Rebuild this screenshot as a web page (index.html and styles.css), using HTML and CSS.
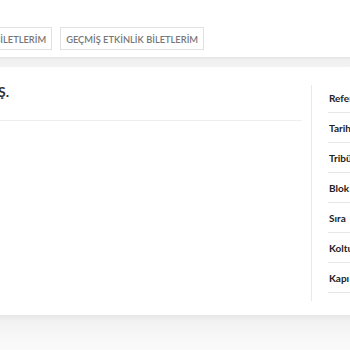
FILE: index.html
```html
<!DOCTYPE html>
<html lang="tr">
<head>
    <meta charset="UTF-8">
    <meta name="viewport" content="width=device-width, initial-scale=1.0">
    <title>Biletlerim</title>

    <link rel="stylesheet" href="styles.css">
</head>
<body>

    <div class="tabs-bar">
        <div class="tabs">
            <a class="tab" href="#">AKTİF BİLETLERİM</a>
            <a class="tab" href="#">GEÇMİŞ ETKİNLİK BİLETLERİM</a>
        </div>
    </div>

    <div class="band"></div>

    <div class="page">
        <div class="content">
            <div class="main">
                <h2 class="company">ORGANİZASYON A.Ş.</h2>
                <div class="rule"></div>
            </div>

            <div class="details">
                <ul class="info-list">
                    <li>Referans No</li>
                    <li>Tarih</li>
                    <li>Tribün</li>
                    <li>Blok</li>
                    <li>Sıra</li>
                    <li>Koltuk</li>
                    <li>Kapı</li>
                </ul>
            </div>
        </div>
    </div>

    <div class="footer-band"></div>

</body>
</html>
```

FILE: styles.css
```css
body {
    font-family: 'Lato', 'Liberation Sans', sans-serif;
    margin: 0;
    padding: 0;
    background-color: #fafafa;
    overflow: hidden;
    width: 350px;
}

/* Tabs on top */
.tabs-bar {
    background-color: #fff;
    height: 57px;
    padding-top: 27px;
    box-sizing: border-box;
    overflow: hidden;
}

.tabs {
    display: flex;
    gap: 8px;
    margin-left: -40px;
}

.tab {
    display: block;
    height: 23px;
    line-height: 23px;
    padding: 0 5px;
    border: 1px solid #e2e2e2;
    box-sizing: border-box;
    font-size: 9.3px;
    font-weight: 600;
    color: #777;
    text-decoration: none;
    white-space: nowrap;
}

.band {
    height: 10px;
    background: linear-gradient(#e3e3e3, #f0f0f0 3px, #f3f3f3);
}

/* Ticket content */
.page {
    background-color: #fff;
    height: 248px;
    overflow: hidden;
}

.content {
    display: flex;
    margin-left: -220px;
    width: 600px;
}

.main {
    width: 522px;
    flex-shrink: 0;
    padding-top: 16px;
}

.company {
    margin: 0 0 0 91px;
    font-size: 14px;
    font-weight: 700;
    color: #333;
    white-space: nowrap;
}

.rule {
    height: 1px;
    background-color: #eee;
    margin-top: 20px;
}

.details {
    margin: 18px 0 0 9px;
    border-left: 1px solid #e8e8e8;
    padding: 0 0 8px 16px;
    flex-grow: 1;
}

.info-list {
    list-style: none;
    margin: 0;
    padding: 0;
    margin-top: -2px;
}

.info-list li {
    height: 30px;
    line-height: 30px;
    border-bottom: 1px solid #e6e6e6;
    box-sizing: border-box;
    font-size: 10px;
    font-weight: 700;
    color: #222;
    padding-left: 1px;
    white-space: nowrap;
}

.footer-band {
    height: 35px;
    background: linear-gradient(#e6e6e6, #f1f1f1 6px, #f7f7f7 20px, #fafafa);
}
```
